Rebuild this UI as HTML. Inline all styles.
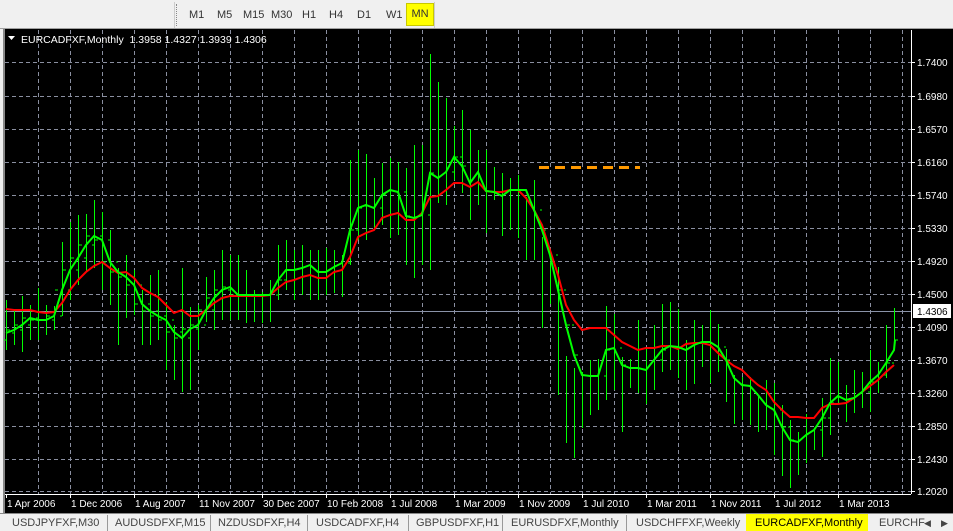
<!DOCTYPE html>
<html><head><meta charset="utf-8"><style>
body{margin:0;width:953px;height:531px;overflow:hidden;background:#f0f0f0;font-family:"Liberation Sans",sans-serif;position:relative}
.tb{position:absolute;left:0;top:0;width:953px;height:28px;background:#f0f0f0;border-bottom:1px solid #a0a0a0}
.tb .grip{position:absolute;left:176px;top:4px;width:2px;height:22px;border-left:1px dotted #888}
.tb span{position:absolute;top:9px;font-size:11px;color:#333}
.tb .mn{left:406px;top:3px;width:28px;height:23px;background:#ffff00;border:1px solid #c8c800;box-sizing:border-box;text-align:center;line-height:21px;padding:0}
.tabs{position:absolute;left:0;top:513px;width:953px;height:18px;background:#f0f0f0;font-size:11px;color:#444}
.tabs span{position:absolute;top:4px}
.sep{position:absolute;top:2px;width:1px;height:16px;background:#999}
</style></head><body>
<div class="tb"><div class="grip"></div>
<span style="left:189px">M1</span><span style="left:217px">M5</span><span style="left:243px">M15</span><span style="left:271px">M30</span><span style="left:302px">H1</span><span style="left:329px">H4</span><span style="left:357px">D1</span><span style="left:386px">W1</span><span class="mn">MN</span>
<div style="position:absolute;left:174px;top:2px;width:1px;height:26px;background:#ccc"></div>
<div style="position:absolute;left:434px;top:2px;width:1px;height:26px;background:#ccc"></div>
</div>
<svg style="position:absolute;left:0;top:29px" width="953" height="484" viewBox="0 29 953 484">
<rect x="3" y="29" width="950" height="484" fill="#000"/>
<rect x="3" y="29" width="2" height="484" fill="#888"/>
<g stroke="#8a8fa0" stroke-width="1" stroke-dasharray="4,3" fill="none">
<path d="M5 62.5H911M5 96.5H911M5 129.5H911M5 162.5H911M5 195.5H911M5 228.5H911M5 261.5H911M5 294.5H911M5 327.5H911M5 360.5H911M5 393.5H911M5 426.5H911M5 459.5H911M5 491.5H911"/>
<path d="M38.5 30V494M70.5 30V494M102.5 30V494M134.5 30V494M166.5 30V494M198.5 30V494M230.5 30V494M262.5 30V494M294.5 30V494M326.5 30V494M358.5 30V494M390.5 30V494M422.5 30V494M454.5 30V494M486.5 30V494M518.5 30V494M550.5 30V494M582.5 30V494M614.5 30V494M646.5 30V494M678.5 30V494M710.5 30V494M742.5 30V494M774.5 30V494M806.5 30V494M838.5 30V494M870.5 30V494M902.5 30V494"/>
</g>
<path d="M5 311.5H911" stroke="#8a93a8" stroke-width="1"/>
<path d="M911.5 30V494M5 494.5H911" stroke="#fff" stroke-width="1"/>
<g stroke="#fff" stroke-width="1"><path d="M911 62.5h4M911 96.5h4M911 129.5h4M911 162.5h4M911 195.5h4M911 228.5h4M911 261.5h4M911 294.5h4M911 327.5h4M911 360.5h4M911 393.5h4M911 426.5h4M911 459.5h4M911 491.5h4"/>
<path d="M6.5 494v4M70.5 494v4M134.5 494v4M198.5 494v4M262.5 494v4M326.5 494v4M390.5 494v4M454.5 494v4M518.5 494v4M582.5 494v4M646.5 494v4M710.5 494v4M774.5 494v4M838.5 494v4"/></g>
<path fill="none" stroke="#00ff00" stroke-width="1" d="M6.5 300V350M14.5 310V345M22.5 296V352M30.5 305V340M38.5 288V340M46.5 305V335M54.5 306V330M62.5 242V316M70.5 222V300M78.5 215V285M86.5 214V272M94.5 200V268M102.5 212V290M110.5 230V305M118.5 268V345M126.5 255V318M134.5 270V315M142.5 290V345M150.5 275V345M158.5 270V340M166.5 302V370M174.5 325V380M182.5 268V392M190.5 307V390M198.5 305V350M206.5 277V322M214.5 270V330M222.5 250V320M230.5 255V320M238.5 255V320M246.5 270V323M254.5 290V322M262.5 292V323M270.5 280V322M278.5 245V300M286.5 240V290M294.5 250V300M302.5 245V295M310.5 250V300M318.5 250V300M326.5 248V295M334.5 250V293M342.5 255V297M350.5 160V265M358.5 150V240M366.5 154V240M374.5 178V230M382.5 163V225M390.5 158V238M398.5 162V235M406.5 168V265M414.5 145V278M422.5 145V265M430.5 54V270M438.5 82V203M446.5 98V205M454.5 126V180M462.5 110V193M470.5 130V220M478.5 150V205M486.5 150V233M494.5 167V200M502.5 173V236M510.5 178V230M518.5 175V238M526.5 197V260M534.5 180V260M542.5 237V328M550.5 262V304M558.5 267V395M566.5 356V443M574.5 368V458M582.5 372V428M590.5 360V415M598.5 359V410M606.5 306V400M614.5 314V390M622.5 357V432M630.5 359V388M638.5 320V393M646.5 347V404M654.5 325V390M662.5 304V372M670.5 302V370M678.5 309V378M686.5 340V390M694.5 320V384M702.5 325V367M710.5 310V383M718.5 324V372M726.5 349V402M734.5 375V424M742.5 377V420M750.5 377V425M758.5 395V432M766.5 380V430M774.5 383V455M782.5 405V476M790.5 420V488M798.5 432V475M806.5 414V463M814.5 428V450M822.5 398V457M830.5 358V435M838.5 362V405M846.5 385V422M854.5 370V413M862.5 372V408M870.5 350V412M878.5 362V393M886.5 325V378M894.5 308V345
M4 340h2M7 330h3M12 333h2M15 325h3M20 330h2M23 318h3M28 325h2M31 320h3M36 318h2M39 320h3M44 320h2M47 316h3M52 320h2M55 290h3M60 316h2M63 270h3M68 290h2M71 258h3M76 270h2M79 245h3M84 258h2M87 236h3M92 245h2M95 240h3M100 236h2M103 262h3M108 240h2M111 272h3M116 262h2M119 277h3M124 272h2M127 285h3M132 277h2M135 304h3M140 285h2M143 311h3M148 304h2M151 316h3M156 311h2M159 320h3M164 316h2M167 332h3M172 320h2M175 338h3M180 332h2M183 329h3M188 338h2M191 325h3M196 329h2M199 310h3M204 325h2M207 298h3M212 310h2M215 290h3M220 298h2M223 287h3M228 290h2M231 295h3M276 295h2M279 280h3M284 280h2M287 270h3M348 263h2M351 230h3M356 230h2M359 208h3M380 208h2M383 195h3M404 192h2M407 216h3M428 215h2M431 173h3M452 172h2M455 157h3M460 157h2M463 166h3M540 210h2M543 230h3M556 255h2M559 290h3M564 290h2M567 325h3M572 325h2M575 355h3M604 376h2M607 350h3M620 348h2M623 365h3M660 360h2M663 350h3M724 347h2M727 360h3M780 410h2M783 427h3M788 427h2M791 440h3M820 430h2M823 418h3M828 418h2M831 403h3M868 392h2M871 382h3M884 375h2M887 363h3M892 363h2M895 340h3"/>
<polyline fill="none" stroke="#ff0000" stroke-width="2" points="6,309 14,310 22,310 30,310 38,312 46,313 54,312 62,303 70,290 78,280 86,272 94,266 102,262 110,268 118,273 126,272 134,278 142,288 150,293 158,297 166,305 174,313 182,310 190,316 198,316 206,310 214,303 222,298 230,296 238,296 246,296 254,296 262,296 270,295 278,288 286,282 294,280 302,277 310,275 318,278 326,278 334,272 342,270 350,257 358,237 366,233 374,230 382,218 390,215 398,213 406,220 414,220 422,213 430,197 438,196 446,190 454,183 462,183 470,187 478,182 486,191 494,192 502,192 510,190 518,190 526,198 534,210 542,225 550,250 558,275 566,305 574,320 582,330 590,328 598,328 606,328 614,335 622,342 630,346 638,350 646,348 654,348 662,346 670,346 678,349 686,344 694,343 702,343 710,345 718,353 726,360 734,366 742,370 750,378 758,385 766,390 774,402 782,410 790,417 798,417 806,418 814,418 822,408 830,404 838,404 846,403 854,398 862,392 870,386 878,380 886,372 894,365"/>
<polyline fill="none" stroke="#00ff00" stroke-width="2" points="6,333 14,330 22,325 30,318 38,320 46,320 54,316 62,290 70,270 78,258 86,245 94,236 102,240 110,262 118,272 126,277 134,285 142,304 150,311 158,316 166,320 174,332 182,338 190,329 198,325 206,310 214,298 222,290 230,287 238,295 246,295 254,295 262,295 270,295 278,280 286,270 294,270 302,268 310,265 318,272 326,272 334,267 342,263 350,230 358,208 366,205 374,208 382,195 390,190 398,192 406,216 414,218 422,215 430,173 438,178 446,172 454,157 462,166 470,183 478,172 486,191 494,192 502,196 510,190 518,190 526,190 534,210 542,230 550,255 558,290 566,325 574,355 582,375 590,376 598,376 606,350 614,348 622,365 630,368 638,368 646,370 654,360 662,350 670,346 678,347 686,350 694,345 702,342 710,342 718,347 726,360 734,378 742,385 750,386 758,395 766,405 774,410 782,427 790,440 798,442 806,435 814,430 822,418 830,403 838,396 846,400 854,398 862,392 870,382 878,375 886,363 894,350 895,340"/>
<path d="M539 167.5H640" stroke="#ff9900" stroke-width="3" stroke-dasharray="10,6"/>
<path d="M8 36h7l-3.5 4z" fill="#fff"/>
<text x="21" y="43" fill="#fff" font-size="10.5" font-family="Liberation Sans" xml:space="preserve">EURCADFXF,Monthly  1.3958 1.4327 1.3939 1.4306</text>
<g fill="#fff" font-size="10" font-family="Liberation Sans">
<text x="917" y="66">1.7400</text><text x="917" y="100">1.6980</text><text x="917" y="133">1.6570</text><text x="917" y="166">1.6160</text><text x="917" y="199">1.5740</text><text x="917" y="232">1.5330</text><text x="917" y="265">1.4920</text><text x="917" y="298">1.4500</text><text x="917" y="331">1.4090</text><text x="917" y="364">1.3670</text><text x="917" y="397">1.3260</text><text x="917" y="430">1.2850</text><text x="917" y="463">1.2430</text><text x="917" y="495">1.2020</text>
<text x="7" y="507">1 Apr 2006</text><text x="71" y="507">1 Dec 2006</text><text x="135" y="507">1 Aug 2007</text><text x="199" y="507">11 Nov 2007</text><text x="263" y="507">30 Dec 2007</text><text x="327" y="507">10 Feb 2008</text><text x="391" y="507">1 Jul 2008</text><text x="455" y="507">1 Mar 2009</text><text x="519" y="507">1 Nov 2009</text><text x="583" y="507">1 Jul 2010</text><text x="647" y="507">1 Mar 2011</text><text x="711" y="507">1 Nov 2011</text><text x="775" y="507">1 Jul 2012</text><text x="839" y="507">1 Mar 2013</text>
</g>
<rect x="913" y="304" width="38" height="14" fill="#fff"/>
<text x="917" y="315" fill="#000" font-size="10" font-family="Liberation Sans">1.4306</text>
</svg>
<div class="tabs">
<div style="position:absolute;left:0;top:0;width:953px;height:1px;background:#888"></div>
<span style="left:12px">USDJPYFXF,M30</span><div class="sep" style="left:107px"></div>
<span style="left:115px">AUDUSDFXF,M15</span><div class="sep" style="left:210px"></div>
<span style="left:218px">NZDUSDFXF,H4</span><div class="sep" style="left:307px"></div>
<span style="left:316px">USDCADFXF,H4</span><div class="sep" style="left:408px"></div>
<span style="left:416px">GBPUSDFXF,H1</span><div class="sep" style="left:502px"></div>
<span style="left:511px">EURUSDFXF,Monthly</span><div class="sep" style="left:626px"></div>
<span style="left:636px">USDCHFFXF,Weekly</span>
<div style="position:absolute;left:746px;top:1px;width:122px;height:17px;background:#ffff00"></div>
<span style="left:755px;color:#000">EURCADFXF,Monthly</span>
<span style="left:879px">EURCHF</span>
<span style="left:924px;font-size:9px;top:5px">◀</span><span style="left:941px;font-size:9px;top:5px">▶</span>
</div>
</body></html>
